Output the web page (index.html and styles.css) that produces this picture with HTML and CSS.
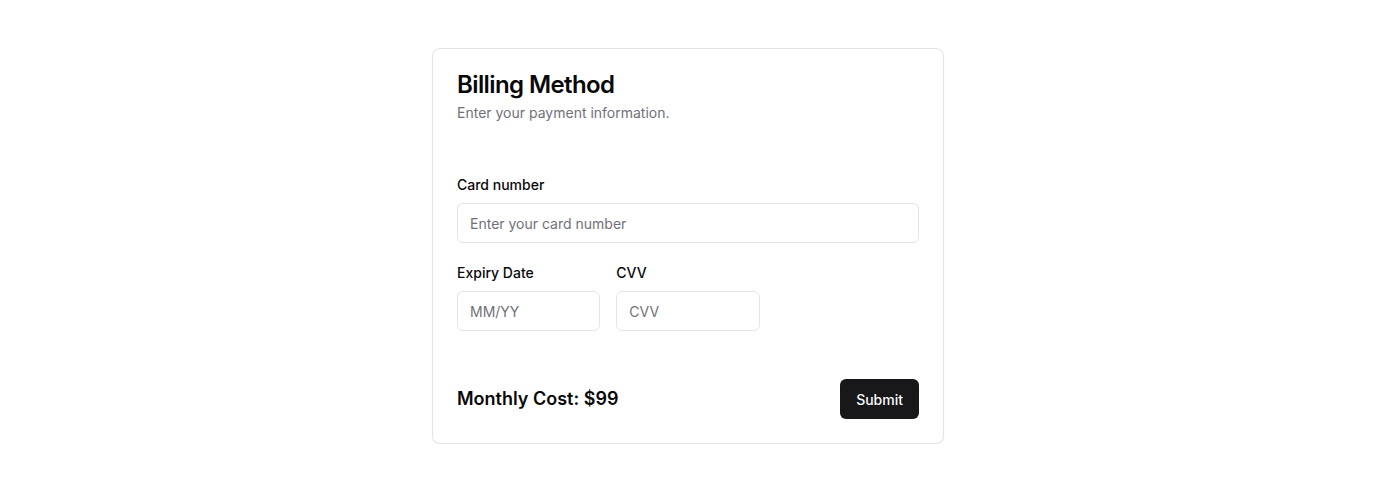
FILE: index.html
```html
<!DOCTYPE html>
<html lang="en">
<head>
<meta charset="utf-8">
<title>Billing Method</title>
<link rel="stylesheet" href="styles.css">
</head>
<body>
<main class="page">
  <form class="card">
    <div class="card-header">
      <h1 class="card-title">Billing Method</h1>
      <p class="card-desc">Enter your payment information.</p>
    </div>
    <div class="card-content">
      <div class="field">
        <label class="label" for="card">Card number</label>
        <input class="input" id="card" type="text" placeholder="Enter your card number">
      </div>
      <div class="row">
        <div class="field">
          <label class="label" for="exp">Expiry Date</label>
          <input class="input" id="exp" type="text" placeholder="MM/YY">
        </div>
        <div class="field">
          <label class="label" for="cvv">CVV</label>
          <input class="input" id="cvv" type="text" placeholder="CVV">
        </div>
      </div>
    </div>
    <div class="card-footer">
      <span class="cost">Monthly Cost: $99</span>
      <button class="button" type="button">Submit</button>
    </div>
  </form>
</main>
</body>
</html>
```
FILE: styles.css
```css
* { box-sizing: border-box; }
html, body { margin: 0; padding: 0; background: #ffffff; }
body {
  font-family: Inter, "Noto Sans", "Liberation Sans", sans-serif;
  color: #09090b;
}
.page {
  display: flex;
  justify-content: center;
  padding-top: 48px;
}
.card {
  width: 512px;
  border: 1px solid #e4e4e7;
  border-radius: 8px;
  background: #ffffff;
  box-shadow: 0 1px 2px rgba(0,0,0,0.05);
  display: flex;
  flex-direction: column;
}
.card-header {
  padding: 24px 24px 24px;
  display: flex;
  flex-direction: column;
  gap: 6px;
}
.card-title {
  margin: 0;
  font-size: 24px;
  line-height: 24px;
  font-weight: 600;
  letter-spacing: -0.025em;
}
.card-desc {
  margin: 0;
  font-size: 14px;
  line-height: 20px;
  color: #71717a;
}
.card-content {
  padding: 28px 24px 48px;
  display: flex;
  flex-direction: column;
  gap: 20px;
}
.field {
  display: flex;
  flex-direction: column;
  gap: 8px;
}
.label {
  font-size: 14px;
  line-height: 20px;
  font-weight: 500;
  color: #09090b;
}
.input {
  height: 40px;
  width: 100%;
  border: 1px solid #e4e4e7;
  border-radius: 6px;
  padding: 0 12px;
  font-family: inherit;
  font-size: 14px;
  color: #09090b;
  background: #ffffff;
  outline: none;
}
.input::placeholder { color: #71717a; }
.row {
  display: grid;
  grid-template-columns: repeat(3, 1fr);
  gap: 16px;
}
.card-footer {
  padding: 0 24px 24px;
  display: flex;
  align-items: center;
  justify-content: space-between;
}
.cost {
  font-size: 18px;
  line-height: 28px;
  font-weight: 600;
}
.button {
  height: 40px;
  padding: 0 16px;
  border: none;
  border-radius: 6px;
  background: #18181b;
  color: #fafafa;
  font-family: inherit;
  font-size: 14px;
  font-weight: 500;
  cursor: pointer;
}
```
